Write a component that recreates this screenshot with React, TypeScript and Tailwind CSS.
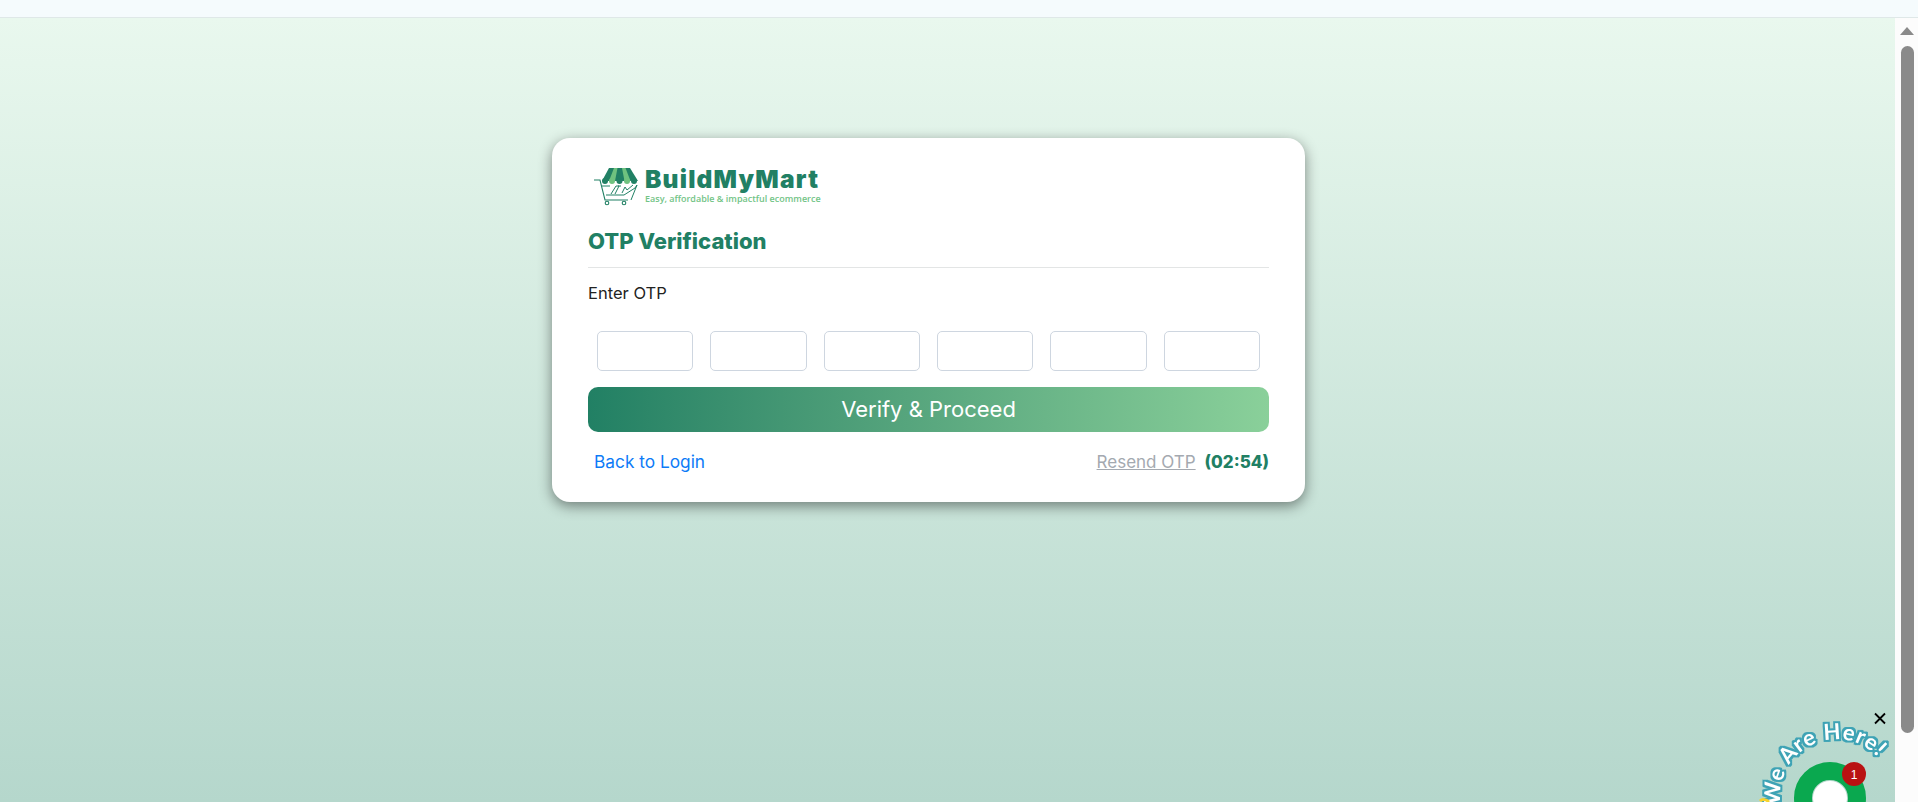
import React from 'react';

const otpSlots = [0, 1, 2, 3, 4, 5];

function CartLogo() {
  return (
    <svg width="46" height="40" viewBox="0 0 46 40" fill="none" className="shrink-0">
      {/* awning */}
      <path d="M15 1h21l8 13H8z" fill="#218064" />
      <path d="M20 1h3.500l-2.500 13h-6zM28 1h3.500l5 13h-6z" fill="#6fc27f" />
      <circle cx="11" cy="14" r="3" fill="#218064" />
      <circle cx="18" cy="14" r="3" fill="#6fc27f" />
      <circle cx="25.500" cy="14" r="3" fill="#218064" />
      <circle cx="33" cy="14" r="3" fill="#6fc27f" />
      <circle cx="40" cy="14" r="3" fill="#218064" />
      {/* cart */}
      <path d="M0 13h6l5 20h23" stroke="#218064" strokeWidth="1.100" />
      <path d="M8 19h8M24 19h3M12 28h18l11-7 2-3-6 15" stroke="#218064" strokeWidth="1" />
      <path d="M17 27l5-8h3l-4 8M28 26l3-6 2 3 6-5" stroke="#218064" strokeWidth="1" />
      <circle cx="13" cy="36" r="1.800" stroke="#218064" strokeWidth="1.100" />
      <circle cx="30" cy="36" r="1.800" stroke="#218064" strokeWidth="1.100" />
    </svg>
  );
}

function ChatWidget() {
  return (
    <div className="absolute right-0 bottom-0 w-[170px] h-[100px] pointer-events-none">
      <svg width="170" height="100" viewBox="0 0 170 100" className="absolute inset-0 overflow-visible">
        <defs>
          <path id="here-arc" d="M33 103 A 55 55 0 0 1 144 84" />
          {/* sticker look: fattened white letters on a teal outline */}
          <filter id="sticker" x="-20%" y="-20%" width="140%" height="140%" colorInterpolationFilters="sRGB">
            <feMorphology in="SourceAlpha" operator="dilate" radius="2" result="outer" />
            <feFlood floodColor="#3ea3b5" />
            <feComposite in2="outer" operator="in" result="outline" />
            <feMorphology in="SourceGraphic" operator="dilate" radius="0.450" result="fat" />
            <feMerge>
              <feMergeNode in="outline" />
              <feMergeNode in="fat" />
            </feMerge>
          </filter>
        </defs>
        <circle cx="82" cy="96" r="27" fill="none" stroke="#0aa84f" strokeWidth="18" />
        <circle cx="82" cy="96" r="17" fill="#fff" />
        <circle cx="106" cy="72" r="12" fill="#b91212" />
        <text x="106" y="76.500" textAnchor="middle" fill="#fff" fontSize="12" fontFamily="'Liberation Sans', sans-serif">1</text>
        <text fontFamily="Lato, sans-serif" fontWeight="700" fontSize="22" letterSpacing="1" fill="#fff" filter="url(#sticker)">
          <textPath href="#here-arc">We Are Here!</textPath>
        </text>
        <path d="M12 99c2-2 6-2 9 1" fill="none" stroke="#f6d32d" strokeWidth="3" />
        {/* close */}
        <path d="M127 11.500l10 10M137 11.500l-10 10" stroke="#000" strokeWidth="1.800" />
      </svg>
    </div>
  );
}

export default function App() {
  return (
    <div className="relative h-[802px] w-full flex flex-col overflow-hidden font-['Inter','Open_Sans',sans-serif]">
      <div className="h-[18px] shrink-0 bg-[#f5fbfd] border-b border-[#dfe8e8]" />

      <div className="flex-1 flex min-h-0">
        <main className="flex-1 bg-gradient-to-b from-[#e9f8ee] to-[#b5d7cc] pt-[120px] pl-[552px]">
          <div className="w-[753px] h-[364px] bg-white rounded-[18px] shadow-[0_4px_14px_rgba(0,0,0,0.45)] pt-[29px] px-[36px]">
            <div className="flex items-start gap-[5px] pl-[6px] h-[42px]">
              <CartLogo />
              <div className="flex flex-col">
                <span className="font-black text-[24.500px] leading-[24px] tracking-[1.200px] text-[#218064]">BuildMyMart</span>
                <span className="font-['Open_Sans',sans-serif] font-semibold text-[9px] leading-[12px] mt-[2px] text-[#72c486]">Easy, affordable &amp; impactful ecommerce</span>
              </div>
            </div>

            <h1 className="mt-[16px] text-[22px] leading-[33px] font-extrabold text-[#218064]">OTP Verification</h1>
            <hr className="mt-[9px] border-t border-[#e3e5e5]" />
            <label className="block mt-[13px] text-[16.500px] leading-[24px] text-[#222]">Enter OTP</label>

            <div className="mt-[26px] px-[9px] flex gap-[17px]">
              {otpSlots.map((slot) => (
                <input
                  key={slot}
                  type="text"
                  maxLength={1}
                  className="flex-1 min-w-0 h-[40px] border border-[#ced6e0] rounded-[5px] bg-white outline-none"
                />
              ))}
            </div>

            <button
              type="button"
              className="mt-[16px] w-full h-[45px] rounded-[10px] bg-gradient-to-r from-[#218064] to-[#8ad09a] text-white text-[22px]"
            >
              Verify &amp; Proceed
            </button>

            <div className="mt-[16px] flex items-center justify-between pl-[6px]">
              <a className="text-[17.300px] leading-[28px] text-[#0d7bf7]">Back to Login</a>
              <div className="flex items-center gap-[9px]">
                <a className="text-[17px] leading-[28px] underline text-[#a4a9b0]">Resend OTP</a>
                <span className="text-[17px] leading-[28px] font-extrabold text-[#218064]">(02:54)</span>
              </div>
            </div>
          </div>
        </main>

        <aside className="w-[23px] shrink-0 bg-[#fcfcfc] flex flex-col items-center pt-[9px] pl-[1px]">
          <div className="w-0 h-0 border-x-[7.500px] border-x-transparent border-b-[8px] border-b-[#8a8a8a]" />
          <div className="mt-[11px] w-[13px] h-[687px] rounded-full bg-[#8a8a8a]" />
        </aside>
      </div>

      <ChatWidget />
    </div>
  );
}
